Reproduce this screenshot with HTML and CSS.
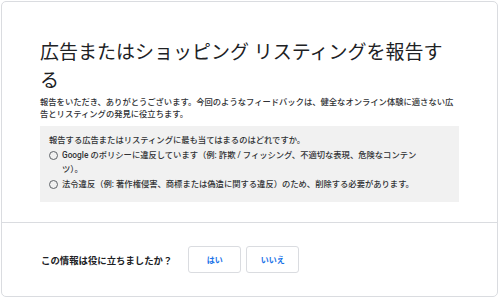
FILE: index.html
```html
<!DOCTYPE html>
<html lang="ja">
<head>
  <meta charset="UTF-8" />
  <title>広告またはショッピング リスティングを報告する</title>
  <link rel="stylesheet" href="styles.css">
</head>
<body>
  <div class="card">
    <div class="content">
      <h1>広告またはショッピング リスティングを報告する</h1>
      <p class="intro">報告をいただき、ありがとうございます。今回のようなフィードバックは、健全なオンライン体験に適さない広告とリスティングの発見に役立ちます。</p>
      <div class="reasons">
        <div class="question">報告する広告またはリスティングに最も当てはまるのはどれですか。</div>
        <label class="option">
          <span class="radio"></span>
          <span>Google のポリシーに違反しています（例: 詐欺 / フィッシング、不適切な表現、危険なコンテンツ）。</span>
        </label>
        <label class="option">
          <span class="radio"></span>
          <span>法令違反（例: 著作権侵害、商標または偽造に関する違反）のため、削除する必要があります。</span>
        </label>
      </div>
    </div>
    <div class="footer">
      <span class="ask">この情報は役に立ちましたか？</span>
      <button>はい</button>
      <button>いいえ</button>
    </div>
  </div>
</body>
</html>
```

FILE: styles.css
```css
body {
  margin: 0;
  padding: 1px 0 0 1px;
  font-family: Roboto, "Noto Sans CJK JP", sans-serif;
  color: #303134;
  background: #fff;
}
.card {
  width: 495px;
  height: 294px;
  border: 1px solid #dadce0;
  border-radius: 5px;
  display: flex;
  flex-direction: column;
}
.content {
  flex: 1;
  padding: 37px 38px 0 38px;
}
h1 {
  margin: 0;
  font-size: 19px;
  line-height: 28px;
  font-weight: 400;
  color: #202124;
}
.intro {
  margin: 1px 0 6px;
  font-size: 8.3px;
  line-height: 12px;
  font-weight: 500;
}
.reasons {
  background: #f1f1f1;
  padding: 7px 37px 11px 9px;
  font-size: 8.3px;
  line-height: 14px;
  font-weight: 500;
}
.option {
  display: grid;
  grid-template-columns: 9px 1fr;
  column-gap: 4px;
  margin-top: 1px;
}
.option + .option {
  margin-top: 1px;
}
.radio {
  width: 7px;
  height: 7px;
  border: 1px solid #5f6368;
  border-radius: 50%;
  margin-top: 3px;
}
.footer {
  height: 73px;
  border-top: 1px solid #dadce0;
  display: flex;
  align-items: center;
  padding-left: 39px;
  gap: 5px;
}
.ask {
  font-size: 9.4px;
  font-weight: 700;
  color: #202124;
  margin-right: 11px;
}
button {
  width: 53px;
  height: 27px;
  background: #fff;
  border: 1px solid #dadce0;
  border-radius: 3px;
  color: #1a73e8;
  font-family: Roboto, "Noto Sans CJK JP", sans-serif;
  font-size: 8px;
  font-weight: 700;
  padding: 0;
}
```
